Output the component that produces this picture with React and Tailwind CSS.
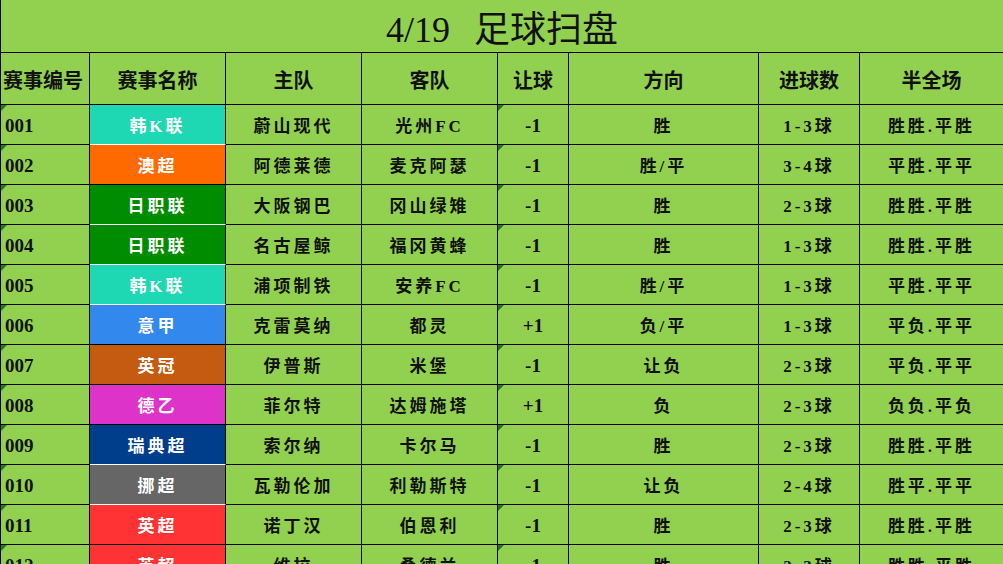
import React from 'react';

const rows = [
  { no: '001', league: '韩K联', bg: 'bg-[#1ed8b4]', sep: 'border-b-white', home: '蔚山现代', away: '光州FC', hc: '-1', dir: '胜', goals: '1-3球', hf: '胜胜.平胜' },
  { no: '002', league: '澳超', bg: 'bg-[#ff6a00]', sep: 'border-b-black', home: '阿德莱德', away: '麦克阿瑟', hc: '-1', dir: '胜/平', goals: '3-4球', hf: '平胜.平平' },
  { no: '003', league: '日职联', bg: 'bg-[#008c00]', sep: 'border-b-white', home: '大阪钢巴', away: '冈山绿雉', hc: '-1', dir: '胜', goals: '2-3球', hf: '胜胜.平胜' },
  { no: '004', league: '日职联', bg: 'bg-[#008c00]', sep: 'border-b-white', home: '名古屋鲸', away: '福冈黄蜂', hc: '-1', dir: '胜', goals: '1-3球', hf: '胜胜.平胜' },
  { no: '005', league: '韩K联', bg: 'bg-[#1ed8b4]', sep: 'border-b-white', home: '浦项制铁', away: '安养FC', hc: '-1', dir: '胜/平', goals: '1-3球', hf: '平胜.平平' },
  { no: '006', league: '意甲', bg: 'bg-[#3388ee]', sep: 'border-b-black', home: '克雷莫纳', away: '都灵', hc: '+1', dir: '负/平', goals: '1-3球', hf: '平负.平平' },
  { no: '007', league: '英冠', bg: 'bg-[#c55a11]', sep: 'border-b-black', home: '伊普斯', away: '米堡', hc: '-1', dir: '让负', goals: '2-3球', hf: '平负.平平' },
  { no: '008', league: '德乙', bg: 'bg-[#dd33c8]', sep: 'border-b-black', home: '菲尔特', away: '达姆施塔', hc: '+1', dir: '负', goals: '2-3球', hf: '负负.平负' },
  { no: '009', league: '瑞典超', bg: 'bg-[#003d8a]', sep: 'border-b-white', home: '索尔纳', away: '卡尔马', hc: '-1', dir: '胜', goals: '2-3球', hf: '胜胜.平胜' },
  { no: '010', league: '挪超', bg: 'bg-[#666666]', sep: 'border-b-white', home: '瓦勒伦加', away: '利勒斯特', hc: '-1', dir: '让负', goals: '2-4球', hf: '胜平.平平' },
  { no: '011', league: '英超', bg: 'bg-[#ff3333]', sep: 'border-b-black', home: '诺丁汉', away: '伯恩利', hc: '-1', dir: '胜', goals: '2-3球', hf: '胜胜.平胜' },
  { no: '012', league: '英超', bg: 'bg-[#ff3333]', sep: 'border-b-black', home: '维拉', away: '桑德兰', hc: '-1', dir: '胜', goals: '2-3球', hf: '胜胜.平胜' },
];

const font = "font-['Liberation_Serif','Noto_Sans_CJK_SC',serif]";

// little green "number stored as text" flag, like the spreadsheet shows
const Flag = () => (
  <span className="absolute left-0 top-0 h-0 w-0 border-t-[6px] border-r-[6px] border-t-[#1c7a1c] border-r-transparent" />
);

const cell = 'h-[40px] pt-[4px] flex items-center justify-center border-r border-b border-black text-[17px] font-bold tracking-[3px] text-[#111]';

export default function App() {
  return (
    <div className={`w-[1003px] h-[564px] overflow-hidden bg-[#92d050] ${font}`}>
      <div className="h-[53px] pt-[8px] flex items-center justify-center border-l border-black border-b text-[36px] text-[#111] leading-none">
        <span>4/19<span className="inline-block w-[24px]" />足球扫盘</span>
      </div>
      <div className="grid grid-cols-[89px_136px_136px_136px_71px_190px_101px_144px] border-l border-black">
        {['赛事编号', '赛事名称', '主队', '客队', '让球', '方向', '进球数', '半全场'].map((h, i) => (
          <div
            key={h}
            className={`h-[52px] pt-[4px] flex items-center border-r border-b border-black text-[20px] font-bold text-[#111] ${i === 0 ? 'justify-start pl-[2px]' : 'justify-center'}`}
          >
            {h}
          </div>
        ))}
        {rows.map((r) => (
          <React.Fragment key={r.no}>
            <div className={`${cell} relative justify-start pl-[4px] tracking-normal text-[19px]`}>
              <Flag />
              {r.no}
            </div>
            <div className={`h-[40px] pt-[4px] flex items-center justify-center border-r border-b border-r-black ${r.sep} ${r.bg} text-white text-[17px] font-bold tracking-[3px]`}>
              {r.league}
            </div>
            <div className={cell}>{r.home}</div>
            <div className={cell}>{r.away}</div>
            <div className={`${cell} relative tracking-normal text-[19px]`}>
              <Flag />
              {r.hc}
            </div>
            <div className={cell}>{r.dir}</div>
            <div className={`${cell} tracking-[1px]`}>{r.goals}</div>
            <div className={cell}>{r.hf}</div>
          </React.Fragment>
        ))}
      </div>
    </div>
  );
}
